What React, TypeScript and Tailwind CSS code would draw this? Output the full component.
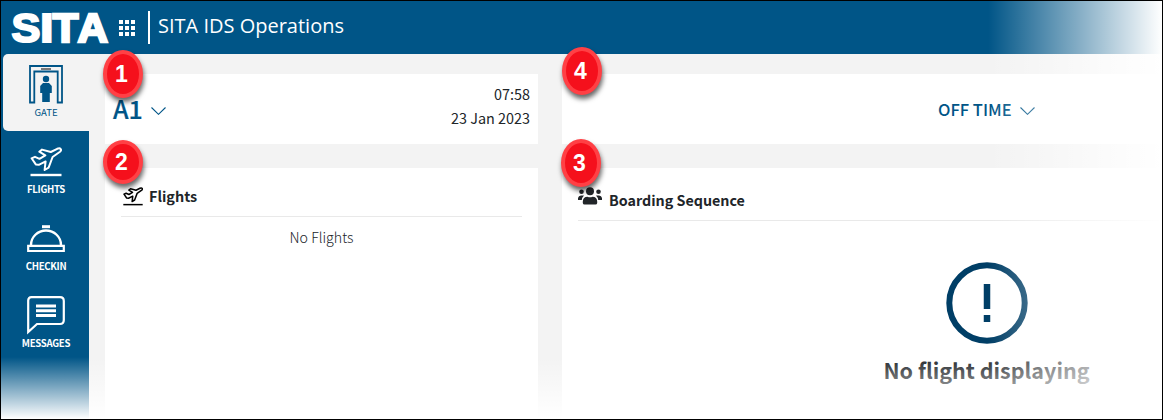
import React from "react";

const sourceFont = "font-['Noto_Sans_CJK_SC',sans-serif]";

function PlaneIcon({ className, stroke = 2 }: { className: string; stroke?: number }) {
  return (
    <svg className={className} viewBox="0 0 32 30" fill="none" stroke="currentColor" strokeWidth={stroke} strokeLinejoin="round">
      <path d="M1.6 11.3 5 9.8 9.5 11.8 15.3 8.3 9.3 4.7 12 2.6 20.8 5 27.2 1.8C30.8.4 32 3 30 4.7L22.6 10 18.6 20.6 14.6 23 15.6 14.4 8.8 17.8 5.8 17.4Z" />
      <path d="M.5 28H31.5" strokeWidth="2.4" />
    </svg>
  );
}

function GateIcon() {
  return (
    <svg className="h-[39px] w-[34px]" viewBox="0 0 34 39">
      <path d="M1 1H33V37.5H28.7V6.5H5.3V37.5H1Z" fill="none" stroke="#005587" strokeWidth="1.8" />
      <path d="M12 4H22" stroke="#444" strokeWidth="1.4" />
      <circle cx="17" cy="14" r="3.2" fill="#005587" />
      <path d="M14 18H20L22.8 21V28H20.8V37H13.2V28H11.2V21Z" fill="#005587" />
    </svg>
  );
}

function BellIcon() {
  return (
    <svg className="h-[28px] w-[38px]" viewBox="0 0 38 28" fill="none" stroke="white">
      <path d="M15 1.7H23" strokeWidth="3" />
      <path d="M4 20A15 14.5 0 0 1 34 20" strokeWidth="2.4" />
      <path d="M1.2 20.8H36.8V26H1.2Z" strokeWidth="2.2" />
    </svg>
  );
}

function MessageIcon() {
  return (
    <svg className="h-[39px] w-[38px]" viewBox="0 0 38 39" fill="none" stroke="white" strokeWidth="2.2">
      <path d="M1.2 36V4.5Q1.2 1.2 4.5 1.2H33Q36.8 1.2 36.8 5V24Q36.8 28 33 28H10Z" />
      <path d="M9 10H29M9 14.7H29M9 19.4H29" strokeWidth="3" />
    </svg>
  );
}

function PeopleIcon() {
  return (
    <svg className="h-[18px] w-6" viewBox="0 0 24 18" fill="#212529">
      <circle cx="12" cy="4.3" r="4" />
      <circle cx="3.5" cy="4.8" r="2.3" />
      <circle cx="20.5" cy="4.8" r="2.3" />
      <path d="M4.8 16V14.5Q5 9.8 9.5 9.8Q12 10.8 14.5 9.8Q19 9.8 19.2 14.5V16Q19 17.5 17.5 17.5H6.5Q5 17.5 4.8 16ZM0 13V11Q.5 8.5 3 8.5H6Q4 10.5 3.8 13ZM24 13V11Q23.5 8.5 21 8.5H18Q20 10.5 20.2 13Z" />
    </svg>
  );
}

function Chevron() {
  return (
    <svg className="h-2 w-[15px]" viewBox="0 0 15 8" fill="none" stroke="#005587" strokeWidth="1.1">
      <path d="M.5.5 7.5 7.3 14.5.5" />
    </svg>
  );
}

function Badge({ n, className }: { n: number; className: string }) {
  return (
    <div className={`absolute flex w-10 items-center justify-center rounded-[50%] border-4 border-[#ff4045] bg-[#f5101c] pr-[3px] font-['Liberation_Sans',sans-serif] text-[23px] leading-none font-bold text-white shadow-[1px_4px_5px_rgba(0,0,0,0.6)] ${className}`}>
      {n}
    </div>
  );
}

function NavItem({ label, children, className }: { label: string; children: React.ReactNode; className: string }) {
  return (
    <div className={`flex flex-col items-center pl-[2px] font-bold text-white ${className}`}>
      {children}
      <span className="text-[9.6px] leading-3 tracking-[-0.3px]">{label}</span>
    </div>
  );
}

export default function App() {
  return (
    <div className={`relative flex h-[420px] w-[1163px] flex-col overflow-hidden border border-black bg-[#f3f3f3] text-[#212529] ${sourceFont}`}>
      <header className="flex h-[53px] shrink-0 items-center bg-[#005587] pl-[10px] text-white">
        <svg className="h-[50px] w-[98px] overflow-visible" viewBox="0 0 98 50" fill="white" stroke="white" strokeWidth="2" fontFamily="Liberation Sans" fontWeight="700" fontSize="41">
          <text x="0.5" y="39.3" textLength="29" lengthAdjust="spacingAndGlyphs">S</text>
          <text x="29" y="39.3" textLength="13.5" lengthAdjust="spacingAndGlyphs">I</text>
          <text x="41.8" y="39.3" textLength="25.5" lengthAdjust="spacingAndGlyphs" strokeWidth="2.6">T</text>
          <text x="66.5" y="39.3" textLength="30.5" lengthAdjust="spacingAndGlyphs" strokeWidth="2.4">A</text>
        </svg>
        <div className="ml-[10px] grid grid-cols-3 gap-[2px]">
          {Array.from({ length: 9 }, (_, i) => <span key={i} className="size-1 bg-white" />)}
        </div>
        <div className="ml-[13px] h-[33px] w-[2px] bg-white" />
        <h1 className="ml-2 pb-[3px] font-['Open_Sans',sans-serif] text-[20px] leading-none">SITA IDS Operations</h1>
      </header>
      <div className="flex min-h-0 flex-1">
        <nav className="flex w-[88px] shrink-0 flex-col bg-[#005587]">
          <div className="ml-[2px] flex h-[77px] flex-col items-center rounded-l-[5px] bg-[#f3f3f3] pt-[11px] text-[#005587]">
            <GateIcon />
            <span className="mt-[2px] text-[9.6px] leading-3">GATE</span>
          </div>
          <NavItem label="FLIGHTS" className="mt-4 h-[78px] gap-[6px]"><PlaneIcon className="h-[30px] w-8" /></NavItem>
          <NavItem label="CHECKIN" className="h-[71px] gap-[7px]"><BellIcon /></NavItem>
          <NavItem label="MESSAGES" className="gap-[2px]"><MessageIcon /></NavItem>
        </nav>
        <main className="grid flex-1 grid-cols-[433px_1fr] grid-rows-[70px_1fr] gap-6 pt-5 pl-4">
          <section className="flex justify-between bg-white pr-2 pl-2">
            <div className="flex items-center gap-2 pt-1">
              <span className="w-[30px] pb-[6px] text-[25px] leading-none font-medium text-[#005587] [-webkit-text-stroke:0.2px_#005587]">A1</span>
              <Chevron />
            </div>
            <div className="pt-2 text-right text-[14.4px] leading-6"><div>07:58</div><div>23 Jan 2023</div></div>
          </section>
          <section className="flex items-center bg-white pl-[376px] text-[#005587]">
            <span className="mr-2 w-[74px] text-[16.5px] font-medium whitespace-nowrap">OFF TIME</span>
            <span className="pt-1"><Chevron /></span>
          </section>
          <section className="bg-white px-4 pt-4">
            <div className="flex h-[33px] items-start border-b border-[#e9e9e9] pl-[2px]">
              <PlaneIcon className="mt-[3px] h-[19px] w-5 text-black" stroke={2.4} />
              <span className="ml-[6px] text-[14.4px] leading-6 font-bold">Flights</span>
            </div>
            <p className="mt-[8px] text-center text-[14.2px] leading-6 font-light">No Flights</p>
          </section>
          <section className="bg-white pt-5 pl-4">
            <div className="flex h-[33px] items-start border-b border-[#e9e9e9]">
              <span className="-mt-px"><PeopleIcon /></span>
              <span className="ml-[7px] text-[14.3px] leading-6 font-bold">Boarding Sequence</span>
            </div>
            <div className="flex w-[817px] flex-col items-center pt-[41px]">
              <svg className="size-[82px]" viewBox="0 0 82 82" fill="none" stroke="#003e66">
                <circle cx="41" cy="41" r="37.7" strokeWidth="6" />
                <path d="M41 22V47M41 53V60" strokeWidth="6.5" />
              </svg>
              <p className="mt-[10px] text-[21.5px] leading-8 font-bold">No flight displaying</p>
            </div>
          </section>
        </main>
      </div>
      <div className="absolute inset-y-0 right-0 w-[174px] bg-linear-to-r from-white/0 to-white" />
      <div className="absolute inset-x-0 bottom-0 h-[62px] bg-linear-to-b from-white/0 to-white" />
      <Badge n={1} className="top-[49px] left-[102px] h-12" />
      <Badge n={2} className="top-[139px] left-[102px] h-[44px]" />
      <Badge n={4} className="top-[46px] left-[561px] h-12" />
      <Badge n={3} className="top-[138px] left-[560px] h-12" />
    </div>
  );
}
